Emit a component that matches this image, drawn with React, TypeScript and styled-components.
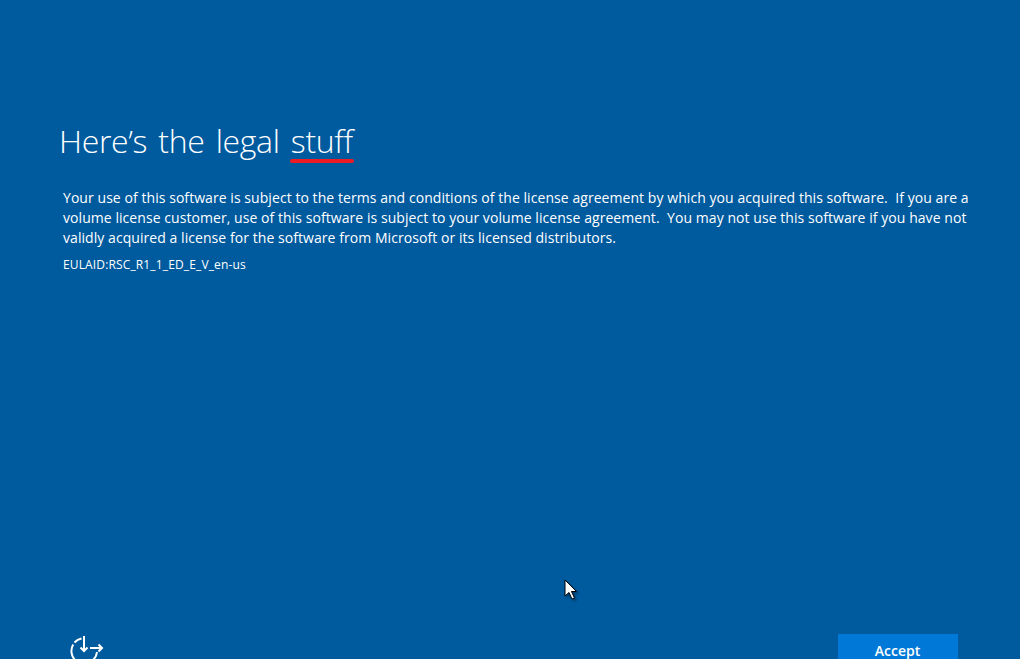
import React from 'react';
import styled, { createGlobalStyle } from 'styled-components';

const GlobalStyle = createGlobalStyle`
  html, body {
    margin: 0;
    padding: 0;
    background: #005a9e;
  }
`

const Page = styled.div`
  width: 1020px;
  height: 659px;
  position: relative;
  overflow: hidden;
  display: flex;
  flex-direction: column;
  justify-content: space-between;
  background: #005a9e;
  color: white;
  font-family: "Open Sans", "Liberation Sans", sans-serif;
`

const Content = styled.div`
  padding: 119px 40px 0 60px;
`

const Title = styled.h1`
  margin: 0 0 26px -1px;
  font-size: 32px;
  line-height: 43px;
  font-weight: 300;
  letter-spacing: -0.35px;
  word-spacing: 3.3px;
  white-space: nowrap;
`

const Marked = styled.span`
  position: relative;

  &::after {
    content: '';
    position: absolute;
    left: -1px;
    right: -1px;
    bottom: -1px;
    height: 4px;
    border-radius: 2px;
    background: #ed1c24;
  }
`

const Body = styled.div`
  padding-left: 3px;
`

const Legal = styled.p`
  margin: 0 0 9px;
  font-size: 14px;
  line-height: 20px;
  letter-spacing: 0.06px;
  white-space: nowrap;
`

const EulaId = styled.div`
  font-size: 12px;
  line-height: 16px;
  letter-spacing: 0.14px;
`

const Footer = styled.div`
  display: flex;
  justify-content: space-between;
  align-items: flex-start;
  height: 25px;
  padding: 0 62px 0 69px;
`

const AccessIcon = styled.svg`
  width: 36px;
  height: 36px;
  margin-top: -2px;
  fill: none;
  stroke: white;
  stroke-width: 2;
`

const AcceptButton = styled.button`
  width: 120px;
  height: 32px;
  padding: 0;
  border: 0;
  background: #0078d7;
  color: white;
  font-family: inherit;
  font-size: 14px;
  font-weight: 600;
  line-height: 34px;
  text-indent: -1px;
`

const Cursor = styled.svg`
  position: absolute;
  left: 564px;
  top: 579px;
  width: 14px;
  height: 21px;
  filter: drop-shadow(2px 2px 1px rgba(0, 0, 0, 0.3));
`

const App = () => (
  <Page>
    <GlobalStyle />
    <Content>
      <Title>Here’s the legal <Marked>stuff</Marked></Title>
      <Body>
        <Legal>
          Your use of this software is subject to the terms and conditions of the license agreement by which you acquired this software.&nbsp; If you are a<br />
          volume license customer, use of this software is subject to your volume license agreement.&nbsp; You may not use this software if you have not<br />
          validly acquired a license for the software from Microsoft or its licensed distributors.
        </Legal>
        <EulaId>EULAID:RSC_R1_1_ED_E_V_en-us</EulaId>
      </Body>
    </Content>
    <Footer>
      <AccessIcon viewBox="0 0 36 36">
        <path d="M12.5 6.5A13 13 0 0 0 5.5 10.5" />
        <path d="M4.2 12.5A13 13 0 0 0 6 28" />
        <path d="M28 20A13 13 0 0 1 24 28" />
        <path d="M15 4V19M11.5 15.5L15 19L18.5 15.5" />
        <path d="M21 16H33M29.5 12.5L33 16L29.5 19.5" />
      </AccessIcon>
      <AcceptButton>Accept</AcceptButton>
    </Footer>
    <Cursor viewBox="0 0 14 21">
      <path d="M1 1V17L5 13.5L8 20L10.5 19L7.5 12.5H12.5Z" fill="white" stroke="black" strokeWidth="1" />
    </Cursor>
  </Page>
);

export default App;
